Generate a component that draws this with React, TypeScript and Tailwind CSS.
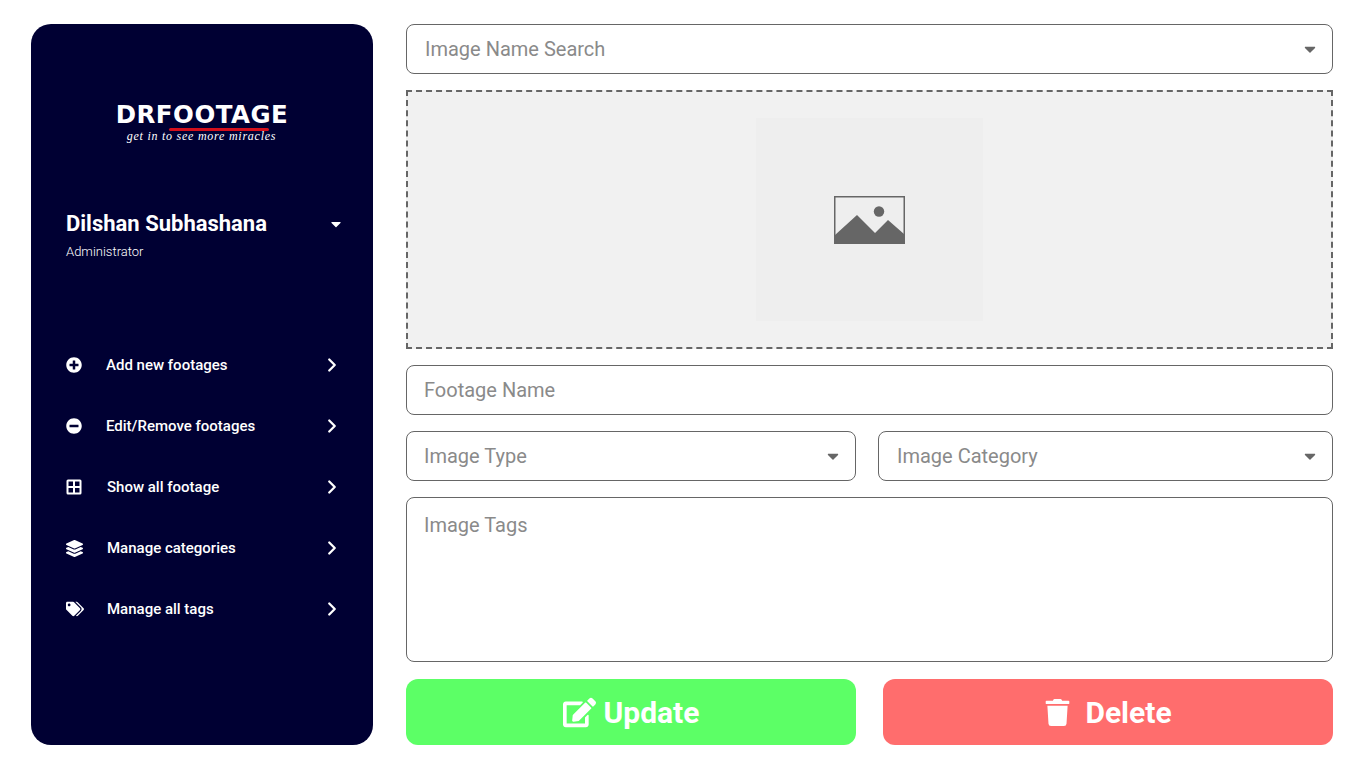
import React from 'react';
import { ChevronRight } from 'lucide-react';
import { FaCaretDown, FaEdit, FaLayerGroup, FaMinusCircle, FaPlusCircle, FaTags, FaTrash } from 'react-icons/fa';

const ROBOTO = "font-['Roboto',sans-serif]";

function GridIcon() {
  return (
    <svg width="16" height="16" viewBox="0 0 16 16">
      <path fillRule="evenodd" fill="currentColor" d="M2 0.5h12a1.5 1.5 0 0 1 1.5 1.5v12a1.5 1.5 0 0 1-1.5 1.5H2A1.5 1.5 0 0 1 .5 14V2A1.5 1.5 0 0 1 2 .5ZM2.5 2.5v4.5h4.5V2.5ZM9 2.5v4.5h4.5V2.5ZM2.5 9v4.5h4.5V9ZM9 9v4.5h4.5V9Z" />
    </svg>
  );
}

function ImagePlaceholder() {
  return (
    <svg width="71" height="48" viewBox="0 0 71 48">
      <rect x="0.75" y="0.75" width="69.5" height="46.5" fill="none" stroke="#666666" strokeWidth="1.5" />
      <circle cx="45" cy="15.5" r="5.2" fill="#666666" />
      <path fill="#666666" d="M1 39 L23 19 L41 37 L54 24 L70 38 V47.5 H1 Z" />
    </svg>
  );
}

const navItems = [
  { label: 'Add new footages', icon: <FaPlusCircle size={16} />, gap: 'gap-[24px]' },
  { label: 'Edit/Remove footages', icon: <FaMinusCircle size={16} />, gap: 'gap-[24px]' },
  { label: 'Show all footage', icon: <GridIcon />, gap: 'gap-[25px]' },
  { label: 'Manage categories', icon: <FaLayerGroup size={17} />, gap: 'gap-[24px]' },
  { label: 'Manage all tags', icon: <FaTags size={18} />, gap: 'gap-[23px]' },
];

function Sidebar() {
  return (
    <aside className="w-[342px] h-[721px] shrink-0 rounded-[20px] bg-[#000033] text-white flex flex-col">
      <div className="h-[186px] flex flex-col items-center pt-[78px] pr-[1px]">
        <div className="relative w-[192px] text-center">
          <div className="font-['DejaVu_Sans',sans-serif] font-bold text-[24px] leading-[27px] tracking-[0.5px] scale-x-[1.02]">DRFOOTAGE</div>
          <div className="absolute left-[63px] top-[26px] w-[100px] h-[3px] rounded-full bg-[#d40f1c]" />
          <div className="font-['Liberation_Serif',serif] italic text-[12px] leading-[14px] tracking-[0.75px] whitespace-nowrap">get in to see more miracles</div>
        </div>
      </div>

      <div className="pl-[35px] pr-[29px] h-[28px] flex items-center justify-between">
        <span className={`${ROBOTO} font-bold text-[22px] leading-[28px]`}>Dilshan Subhashana</span>
        <FaCaretDown size={16} />
      </div>
      <div className={`${ROBOTO} pl-[35px] mt-[6px] font-light text-[13px] leading-[16px]`}>Administrator</div>

      <nav className="mt-[90px] flex flex-col gap-[31px] pl-[35px] pr-[30px]">
        {navItems.map(item => (
          <div key={item.label} className="h-[30px] flex items-center">
            <div className={`flex flex-1 items-center ${item.gap}`}>
              {item.icon}
              <span className={`${ROBOTO} font-medium text-[15px]`}>{item.label}</span>
            </div>
            <ChevronRight size={22} strokeWidth={2.5} />
          </div>
        ))}
      </nav>
    </aside>
  );
}

function SelectBox({ label, className, pad }: { label: string; className: string; pad: string }) {
  return (
    <div className={`h-[50px] rounded-[8px] border border-[#666666] bg-white flex items-center justify-between pr-[13px] ${pad} ${className}`}>
      <span className={`${ROBOTO} text-[20px] text-[#8a8a8a]`}>{label}</span>
      <FaCaretDown size={18} className="text-[#666666]" />
    </div>
  );
}

export default function App() {
  return (
    <div className="w-[1366px] h-[768px] bg-white overflow-hidden flex gap-[33px] pt-[24px] pl-[31px] pr-[33px]">
      <Sidebar />
      <main className="flex-1 flex flex-col gap-[16px]">
        <SelectBox label="Image Name Search" className="w-full" pad="pl-[18px]" />

        <div className="h-[259px] border-2 border-dashed border-[#666666] bg-[#f1f1f1] flex items-center justify-center">
          <div className="w-[227px] h-[203px] bg-[#eeeeee] flex items-center justify-center">
            <ImagePlaceholder />
          </div>
        </div>

        <input
          placeholder="Footage Name"
          className={`${ROBOTO} h-[50px] shrink-0 rounded-[8px] border border-[#666666] px-[17px] text-[20px] placeholder:text-[#8a8a8a] outline-none`}
        />

        <div className="flex gap-[22px]">
          <SelectBox label="Image Type" className="w-[450px]" pad="pl-[17px]" />
          <SelectBox label="Image Category" className="flex-1" pad="pl-[18px]" />
        </div>

        <textarea
          placeholder="Image Tags"
          className={`${ROBOTO} h-[165px] shrink-0 resize-none rounded-[8px] border border-[#666666] px-[17px] py-[13px] text-[20px] leading-[28px] placeholder:text-[#8a8a8a] outline-none`}
        />

        <div className="flex gap-[27px] mt-[1px]">
          <button className={`${ROBOTO} w-[450px] h-[66px] rounded-[12px] bg-[#5cff66] text-white font-bold text-[30px] flex items-center justify-center gap-[8px]`}>
            <FaEdit size={33} />
            Update
          </button>
          <button className={`${ROBOTO} flex-1 h-[66px] rounded-[12px] bg-[#ff6d6d] text-white font-bold text-[30px] flex items-center justify-center gap-[14px]`}>
            <FaTrash size={27} />
            Delete
          </button>
        </div>
      </main>
    </div>
  );
}
